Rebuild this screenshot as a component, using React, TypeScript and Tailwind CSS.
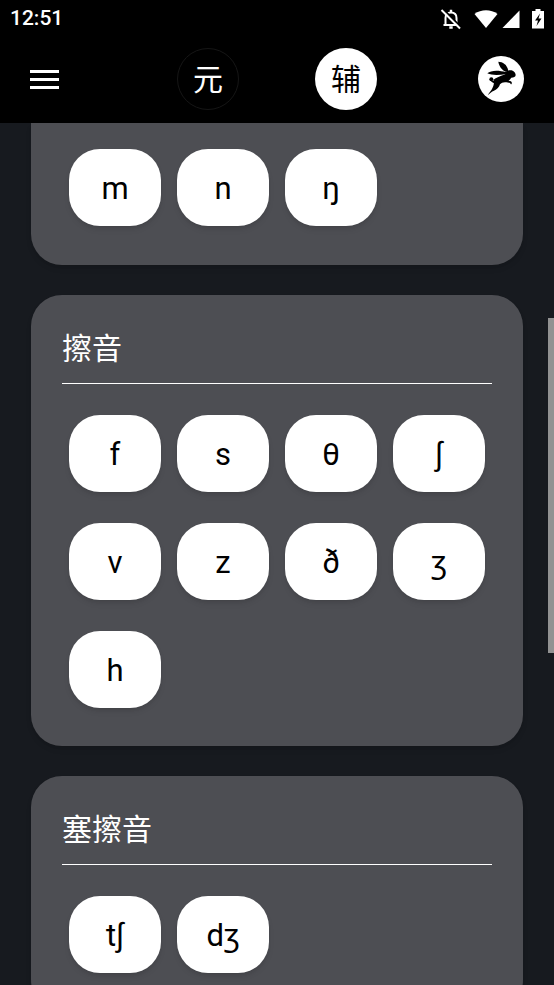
import { useState, JSX } from "react";

interface Group {
  title: string;
  symbols: string[];
}

const groups: Group[] = [
  {
    title: "擦音",
    symbols: ["f", "s", "θ", "ʃ", "v", "z", "ð", "ʒ", "h"],
  },
  { title: "塞擦音", symbols: ["tʃ", "dʒ"] },
];

const nasals: string[] = ["m", "n", "ŋ"];

const tabs: string[] = ["元", "辅"];

const StatusBar = (): JSX.Element => (
  <div className="flex h-[38px] items-center justify-between px-2.5 text-white">
    <span className="font-[Roboto,sans-serif] text-[21px] font-medium">
      12:51
    </span>
    <div className="flex items-center">
      <svg viewBox="0 0 22 22" className="mr-3 size-[22px]" fill="none" stroke="currentColor">
        <path
          d="M5.5 16.5V10c0-3.500 2.300-5.500 5.500-5.500s5.500 2 5.500 5.500v6.500M3.500 17h15"
          strokeWidth="2"
        />
        <path d="M11 1.800v2.500M9.300 19.500h3.400" strokeWidth="2.400" />
        <path d="M3 1l18.500 18.500" stroke="#000" strokeWidth="1.800" />
        <path d="M1.500 2l18.500 18.500" strokeWidth="2" />
      </svg>
      <svg viewBox="0 0 24 19" className="mr-1 h-[19px] w-6" fill="currentColor">
        <path d="M.5 4C7-.9 17-.9 23.500 4L12 18z" />
      </svg>
      <svg viewBox="0 0 18 19" className="mr-3 h-[19px] w-[18px]" fill="currentColor">
        <path d="M17.500 .5v17.500H.5z" />
      </svg>
      <svg viewBox="0 0 12 20" className="h-5 w-3" fill="currentColor">
        <path d="M3.500 0h5v2H12v17.500H0V2h3.500z" />
        <path d="M8 4.500L3 11.500h3L4.500 17 9.500 9.500h-3z" fill="#000" />
      </svg>
    </div>
  </div>
);

const Rabbit = (): JSX.Element => (
  <svg viewBox="21 21 138 138" className="size-[46px]">
    <circle cx="90" cy="90" r="69" fill="#fff" />
    {/* ears */}
    <path d="M82 38c13 0 26 8 30 27l-8 3C93 63 84 52 82 38z" />
    <path d="M49 73c10-9 34-10 56-3l-2 6c-18 2-40 4-54-3z" />
    {/* head */}
    <path d="M102 70c6-6 16-8 23-5 5 2 9 8 9 13 0 6-6 8-13 8l-18 2z" />
    {/* tail */}
    <circle cx="61" cy="91" r="6" />
    {/* body and legs */}
    <path d="M67 93c6-6 18-10 36-17l18 7c-1 6-5 10-9 12 8 0 12 3 10 9-1 3-4 2-4-1-3-2-10-3-16-3-7 0-11 2-15 6-2 9-9 15-18 19-7 3-13 8-19 14 5-8 11-14 14-21 3-6 6-14 4-22z" />
    <path d="M58 92c4 4 10 5 15 2v8c-7 0-13-3-15-10z" />
  </svg>
);

const SymbolList = ({ symbols }: { symbols: string[] }): JSX.Element => (
  <div className="flex flex-wrap gap-x-4 gap-y-[31px] px-[7px]">
    {symbols.map((symbol) => (
      <button
        key={symbol}
        className="h-[77px] w-[92px] rounded-[31px] bg-white pt-[3px] text-[31px] text-black shadow-md"
      >
        {symbol}
      </button>
    ))}
  </div>
);

const App = (): JSX.Element => {
  const [activeTab, setActiveTab] = useState<number>(1);

  return (
    <div className="flex h-screen flex-col overflow-hidden bg-[#171a1f] font-[Roboto,'Noto_Sans','Noto_Sans_CJK_SC',sans-serif]">
      <header className="shrink-0 bg-black">
        <StatusBar />
        <nav className="grid h-[85px] grid-cols-[1fr_auto_1fr] items-center px-[30px] pb-[3px]">
          <button aria-label="menu" className="flex w-[29px] flex-col gap-[5px]">
            <span className="h-[3px] bg-white" />
            <span className="h-[3px] bg-white" />
            <span className="h-[3px] bg-white" />
          </button>
          <div className="flex gap-[76px]">
            {tabs.map((tab, i) => (
              <button
                key={tab}
                onClick={() => setActiveTab(i)}
                className={`size-[62px] rounded-full text-[30px] ${
                  activeTab === i
                    ? "bg-white text-black"
                    : "border border-[#161616] text-white"
                }`}
              >
                {tab}
              </button>
            ))}
          </div>
          <button aria-label="profile" className="justify-self-end">
            <Rabbit />
          </button>
        </nav>
      </header>

      <main className="relative min-h-0 flex-1 overflow-hidden px-[31px]">
        <div className="flex flex-col gap-[30px]">
          <section className="rounded-b-[31px] bg-[#4d4e53] px-[31px] pt-[26px] pb-[39px] shadow-md">
            <SymbolList symbols={nasals} />
          </section>
          {groups.map((group) => (
            <section
              key={group.title}
              className="rounded-[31px] bg-[#4d4e53] px-[31px] pt-8 pb-[38px] shadow-md"
            >
              <h2 className="mb-[31px] border-b border-white pb-[13px] text-[30px] leading-[43px] text-white">
                {group.title}
              </h2>
              <SymbolList symbols={group.symbols} />
            </section>
          ))}
        </div>
        <div className="absolute top-[195px] right-0 h-[335px] w-1.5 bg-[#929292]" />
      </main>
    </div>
  );
};

export default App;
